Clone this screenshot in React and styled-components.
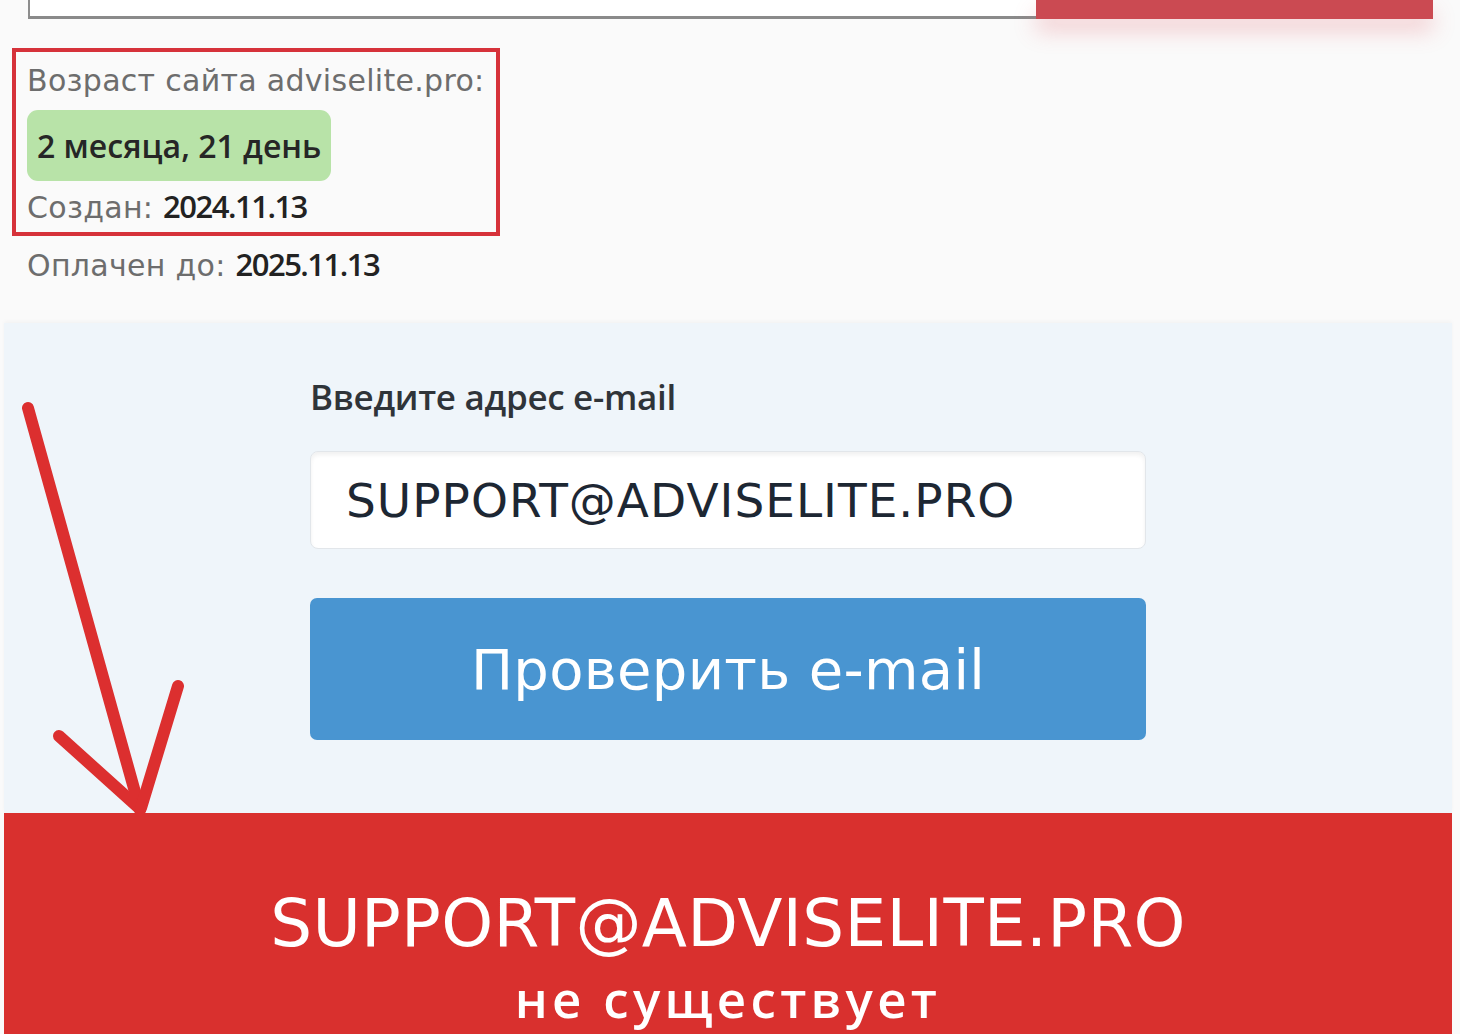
import React from 'react';
import styled, { createGlobalStyle } from 'styled-components';

const GlobalStyle = createGlobalStyle`
  html, body {
    margin: 0;
    padding: 0;
    background: #fafafa;
    overflow: hidden;
  }
  body {
    font-family: "DejaVu Sans", "Open Sans", sans-serif;
    width: 1460px;
    height: 1034px;
  }
`;

const Page = styled.div`
  position: relative;
  width: 1460px;
  height: 1034px;
  overflow: hidden;
`;

const TopBar = styled.div`
  display: flex;
  margin-left: 28px;
  height: 19px;
`;

const TopInput = styled.div`
  width: 1008px;
  background: #fff;
  border-left: 2px solid #8d8d8d;
  border-bottom: 3px solid #8a8a8a;
  box-sizing: border-box;
`;

const TopButton = styled.div`
  width: 397px;
  background: #cb4a52;
  box-shadow: 0 12px 22px rgba(226, 90, 100, 0.28);
`;

const AgeBox = styled.div`
  margin: 29px 0 0 12px;
  width: 488px;
  height: 188px;
  box-sizing: border-box;
  border: 4px solid #d6323a;
  padding: 7px 0 0 11px;
`;

const Line = styled.div`
  height: 44px;
  font-size: 30px;
  line-height: 44px;
  color: #6d6d6d;
  white-space: nowrap;
  letter-spacing: 0.3px;
  margin-top: ${p => p.$mt || 0}px;
  margin-left: ${p => p.$ml || 0}px;
`;

const Strong = styled.span`
  font-family: "Open Sans", sans-serif;
  color: #222;
  font-weight: 600;
  font-size: 31px;
  line-height: 1;
  letter-spacing: -1.5px;
`;

const AgeBadge = styled.div`
  display: inline-flex;
  align-items: center;
  margin-top: 7px;
  height: 71px;
  padding: 0 10px;
  border-radius: 11px;
  background: #b8e3a8;
  color: #262626;
  font-family: "Open Sans", sans-serif;
  font-size: 32px;
  font-weight: 600;
`;

const CheckSection = styled.section`
  margin: 35px 8px 0 4px;
  height: 490px;
  box-sizing: border-box;
  background: #eff5fa;
  padding-top: 54px;
  box-shadow: 0 -2px 4px rgba(0, 0, 0, 0.03);
`;

const Form = styled.div`
  width: 836px;
  margin: 0 auto;
  display: flex;
  flex-direction: column;
`;

const Label = styled.div`
  font-family: "Open Sans", sans-serif;
  font-size: 35px;
  line-height: 40px;
  font-weight: 600;
  color: #2f3439;
  letter-spacing: -0.3px;
  margin-bottom: 34px;
`;

const EmailInput = styled.div`
  height: 98px;
  box-sizing: border-box;
  background: #fff;
  border: 1px solid #e2e6ea;
  border-radius: 8px;
  box-shadow: inset 0 3px 4px rgba(0, 0, 0, 0.06);
  display: flex;
  align-items: center;
  padding-left: 35px;
  font-size: 47px;
  color: #1d2733;
  letter-spacing: 1px;
`;

const CheckButton = styled.div`
  margin-top: 49px;
  height: 142px;
  border-radius: 7px;
  background: #4995d1;
  color: #fff;
  display: flex;
  align-items: center;
  justify-content: center;
  font-size: 56px;
  letter-spacing: 0.3px;
`;

const ResultSection = styled.section`
  margin: 0 8px 0 4px;
  height: 240px;
  background: #d9302e;
  color: #fff;
  text-align: center;
  padding-top: 71px;
  box-sizing: border-box;
`;

const ResultEmail = styled.div`
  font-size: 66px;
  line-height: 80px;
  letter-spacing: 0.3px;
`;

const ResultNote = styled.div`
  margin-top: 3px;
  font-family: "Open Sans", sans-serif;
  font-size: 51px;
  font-weight: 600;
  line-height: 62px;
  letter-spacing: 4.3px;
`;

const Arrow = styled.svg`
  position: absolute;
  left: 0;
  top: 0;
  pointer-events: none;
`;

export default function App() {
  return (
    <Page>
      <GlobalStyle />
      <TopBar>
        <TopInput />
        <TopButton />
      </TopBar>

      <AgeBox>
        <Line>Возраст сайта adviselite.pro:</Line>
        <AgeBadge>2 месяца, 21 день</AgeBadge>
        <Line $mt={5}>
          Создан: <Strong>2024.11.13</Strong>
        </Line>
      </AgeBox>
      <Line $mt={8} $ml={27}>
        Оплачен до: <Strong>2025.11.13</Strong>
      </Line>

      <CheckSection>
        <Form>
          <Label>Введите адрес e-mail</Label>
          <EmailInput>SUPPORT@ADVISELITE.PRO</EmailInput>
          <CheckButton>Проверить e-mail</CheckButton>
        </Form>
      </CheckSection>

      <ResultSection>
        <ResultEmail>SUPPORT@ADVISELITE.PRO</ResultEmail>
        <ResultNote>не существует</ResultNote>
      </ResultSection>

      <Arrow width="220" height="840" viewBox="0 0 220 840">
        <g stroke="#dc2f2f" strokeWidth="12" strokeLinecap="round" fill="none">
          <line x1="28" y1="408" x2="140" y2="810" />
          <line x1="59" y1="736" x2="139" y2="808" />
          <line x1="178" y1="686" x2="141" y2="808" />
        </g>
      </Arrow>
    </Page>
  );
}
